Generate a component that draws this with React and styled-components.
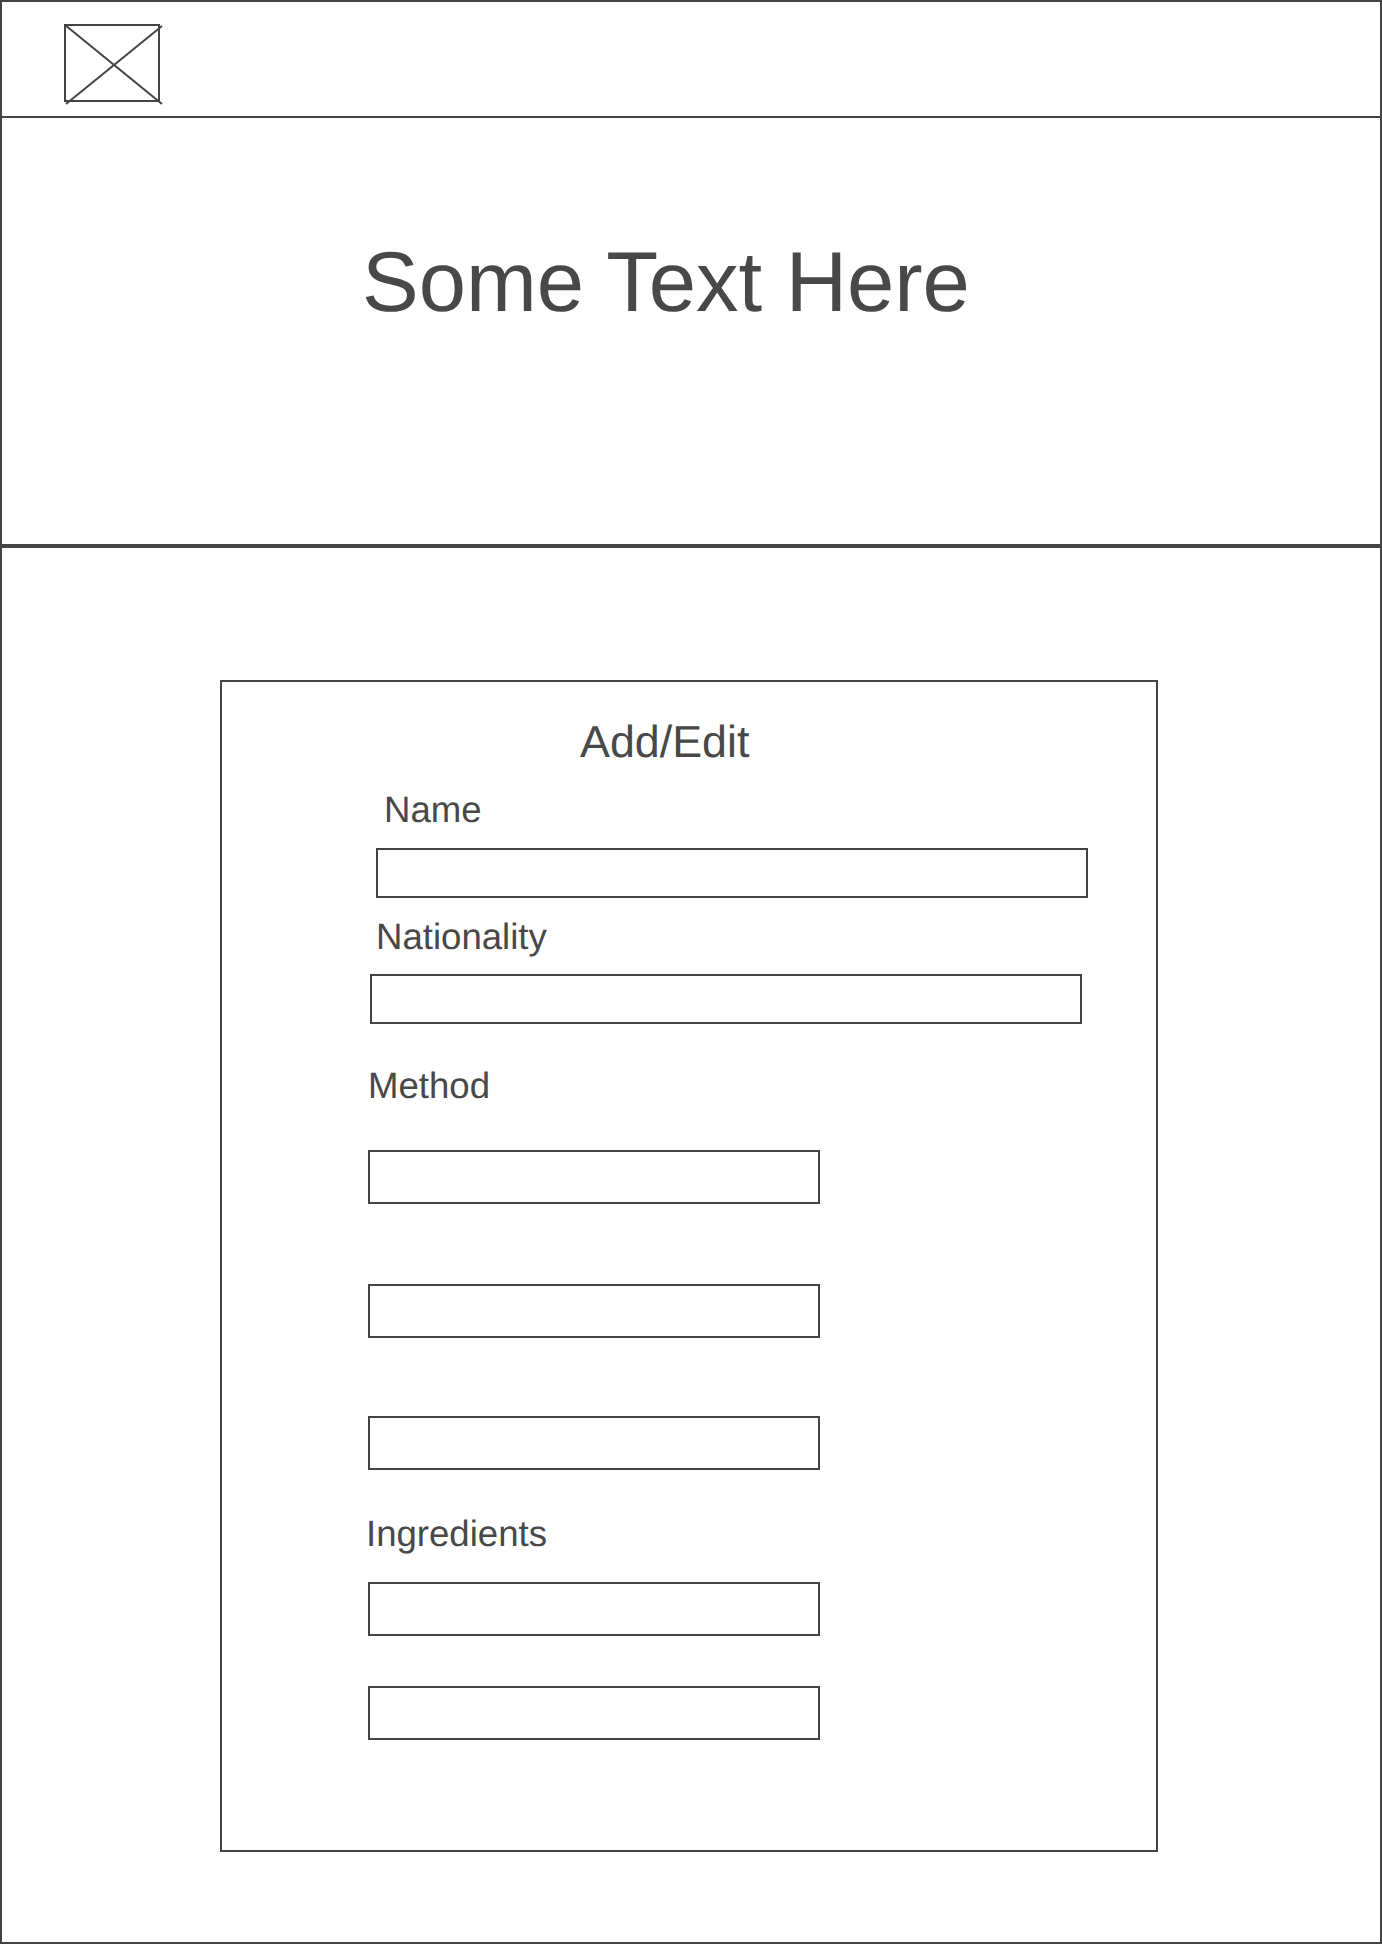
import React from "react";
import styled, { createGlobalStyle } from "styled-components";

const Global = createGlobalStyle`
  html, body { margin: 0; padding: 0; background: #fff; }
  * { box-sizing: border-box; }
`;

const INK = "#444444";

const Frame = styled.div`
  width: 1382px;
  height: 1944px;
  border: 2px solid ${INK};
  display: flex;
  flex-direction: column;
  background: #fff;
  color: #484848;
  font-family: "Liberation Sans", Arial, sans-serif;
  text-rendering: geometricPrecision;
`;

const TopBar = styled.header`
  height: 116px;
  flex: none;
  border-bottom: 2px solid ${INK};
  padding: 22px 0 0 62px;
`;

const LogoSvg = styled.svg`
  display: block;
  overflow: visible;
`;

const Hero = styled.section`
  height: 430px;
  flex: none;
  border-bottom: 4px solid ${INK};
  padding: 117px 0 0 360px;
`;

const HeroTitle = styled.h1`
  margin: 0;
  font-size: 85px;
  line-height: 96px;
  font-weight: 400;
`;

const Main = styled.main`
  flex: 1;
  padding: 132px 0 0 218px;
`;

const Card = styled.section`
  width: 938px;
  height: 1172px;
  border: 2px solid ${INK};
  display: flex;
  flex-direction: column;
  align-items: flex-start;
`;

const CardTitle = styled.h2`
  margin: 34px 0 0 358px;
  font-size: 44.8px;
  line-height: 52px;
  font-weight: 400;
`;

const Label = styled.label`
  display: block;
  font-size: 36.6px;
  line-height: 42px;
  margin-top: ${(p) => p.$top}px;
  margin-left: ${(p) => p.$left}px;
`;

const Box = styled.div`
  border: 2px solid ${INK};
  flex: none;
  width: ${(p) => p.$width}px;
  height: ${(p) => p.$height}px;
  margin-top: ${(p) => p.$top}px;
  margin-left: ${(p) => p.$left}px;
`;

const Logo = () => (
  <LogoSvg width="96" height="78" viewBox="0 0 96 78" aria-hidden="true">
    <rect x="1" y="1" width="94" height="76" fill="none" stroke={INK} strokeWidth="2" />
    <path d="M1 1 L98 80 M2 80 L98 2" fill="none" stroke={INK} strokeWidth="2" />
  </LogoSvg>
);

export default function App() {
  return (
    <>
      <Global />
      <Frame>
        <TopBar>
          <Logo />
        </TopBar>
        <Hero>
          <HeroTitle>Some Text Here</HeroTitle>
        </Hero>
        <Main>
          <Card>
            <CardTitle>Add/Edit</CardTitle>
            <Label $top={21} $left={162}>Name</Label>
            <Box $top={17} $left={154} $width={712} $height={50} />
            <Label $top={18} $left={154}>Nationality</Label>
            <Box $top={16} $left={148} $width={712} $height={50} />
            <Label $top={41} $left={146}>Method</Label>
            <Box $top={43} $left={146} $width={452} $height={54} />
            <Box $top={80} $left={146} $width={452} $height={54} />
            <Box $top={78} $left={146} $width={452} $height={54} />
            <Label $top={43} $left={144}>Ingredients</Label>
            <Box $top={27} $left={146} $width={452} $height={54} />
            <Box $top={50} $left={146} $width={452} $height={54} />
          </Card>
        </Main>
      </Frame>
    </>
  );
}
